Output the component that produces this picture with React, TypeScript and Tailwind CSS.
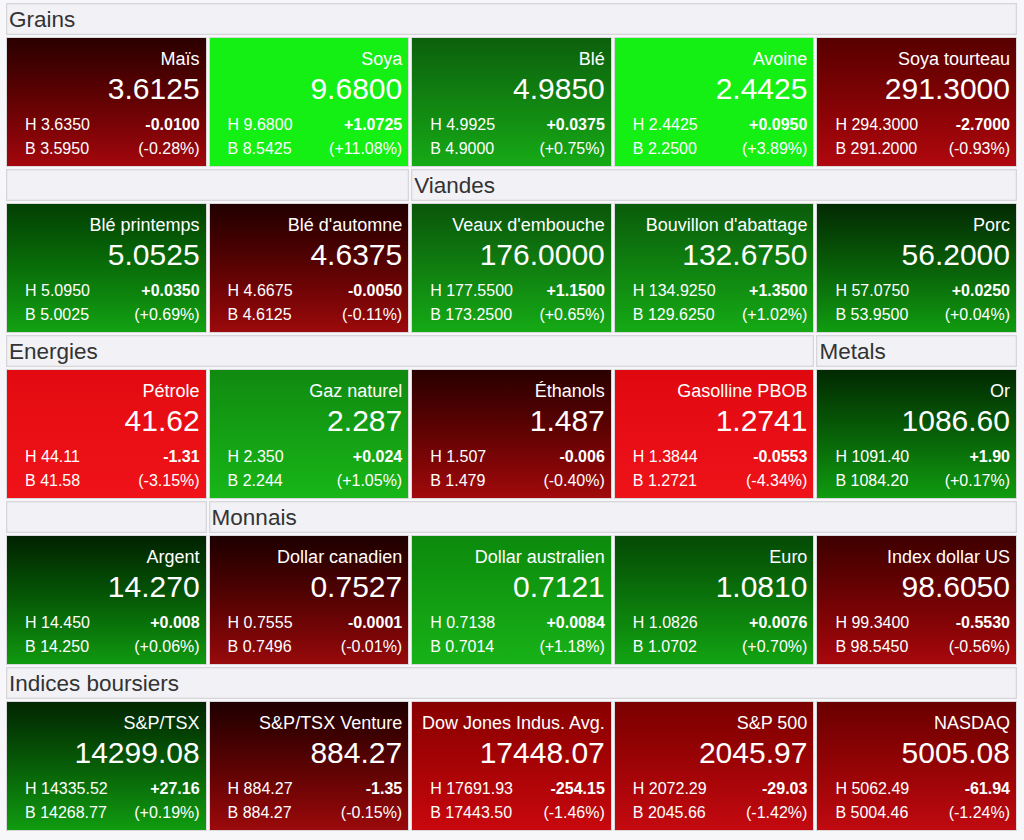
import React from "react";

type Tile = {
  name: string;
  last: string;
  high: string;
  low: string;
  change: string;
  pct: string;
  bg: string;
};

type HeaderCell = { label: string; span: string };

type Section = {
  headers: HeaderCell[];
  tiles: Tile[];
};

const sections: Section[] = [
  {
    headers: [{ label: "Grains", span: "col-span-5" }],
    tiles: [
      { name: "Maïs", last: "3.6125", high: "3.6350", low: "3.5950", change: "-0.0100", pct: "(-0.28%)", bg: "bg-linear-to-b from-[#2b0000] to-[#a3070d]" },
      { name: "Soya", last: "9.6800", high: "9.6800", low: "8.5425", change: "+1.0725", pct: "(+11.08%)", bg: "bg-[#14ef14]" },
      { name: "Blé", last: "4.9850", high: "4.9925", low: "4.9000", change: "+0.0375", pct: "(+0.75%)", bg: "bg-linear-to-b from-[#0c600c] to-[#16aa16]" },
      { name: "Avoine", last: "2.4425", high: "2.4425", low: "2.2500", change: "+0.0950", pct: "(+3.89%)", bg: "bg-[#14ef14]" },
      { name: "Soya tourteau", last: "291.3000", high: "294.3000", low: "291.2000", change: "-2.7000", pct: "(-0.93%)", bg: "bg-linear-to-b from-[#580000] to-[#b0080e]" },
    ],
  },
  {
    headers: [
      { label: "", span: "col-span-2" },
      { label: "Viandes", span: "col-span-3" },
    ],
    tiles: [
      { name: "Blé printemps", last: "5.0525", high: "5.0950", low: "5.0025", change: "+0.0350", pct: "(+0.69%)", bg: "bg-linear-to-b from-[#034003] to-[#12a212]" },
      { name: "Blé d'automne", last: "4.6375", high: "4.6675", low: "4.6125", change: "-0.0050", pct: "(-0.11%)", bg: "bg-linear-to-b from-[#220000] to-[#9c0a0c]" },
      { name: "Veaux d'embouche", last: "176.0000", high: "177.5500", low: "173.2500", change: "+1.1500", pct: "(+0.65%)", bg: "bg-linear-to-b from-[#0a560a] to-[#15aa15]" },
      { name: "Bouvillon d'abattage", last: "132.6750", high: "134.9250", low: "129.6250", change: "+1.3500", pct: "(+1.02%)", bg: "bg-linear-to-b from-[#0a5c0a] to-[#15aa15]" },
      { name: "Porc", last: "56.2000", high: "57.0750", low: "53.9500", change: "+0.0250", pct: "(+0.04%)", bg: "bg-linear-to-b from-[#032a03] to-[#109c10]" },
    ],
  },
  {
    headers: [
      { label: "Energies", span: "col-span-4" },
      { label: "Metals", span: "col-span-1" },
    ],
    tiles: [
      { name: "Pétrole", last: "41.62", high: "44.11", low: "41.58", change: "-1.31", pct: "(-3.15%)", bg: "bg-linear-to-b from-[#e20a10] to-[#f01319]" },
      { name: "Gaz naturel", last: "2.287", high: "2.350", low: "2.244", change: "+0.024", pct: "(+1.05%)", bg: "bg-linear-to-b from-[#108a10] to-[#18b618]" },
      { name: "Éthanols", last: "1.487", high: "1.507", low: "1.479", change: "-0.006", pct: "(-0.40%)", bg: "bg-linear-to-b from-[#2a0000] to-[#a20a0c]" },
      { name: "Gasolline PBOB", last: "1.2741", high: "1.3844", low: "1.2721", change: "-0.0553", pct: "(-4.34%)", bg: "bg-linear-to-b from-[#e0080f] to-[#ef1219]" },
      { name: "Or", last: "1086.60", high: "1091.40", low: "1084.20", change: "+1.90", pct: "(+0.17%)", bg: "bg-linear-to-b from-[#022a02] to-[#109c10]" },
    ],
  },
  {
    headers: [
      { label: "", span: "col-span-1" },
      { label: "Monnais", span: "col-span-4" },
    ],
    tiles: [
      { name: "Argent", last: "14.270", high: "14.450", low: "14.250", change: "+0.008", pct: "(+0.06%)", bg: "bg-linear-to-b from-[#012201] to-[#109a10]" },
      { name: "Dollar canadien", last: "0.7527", high: "0.7555", low: "0.7496", change: "-0.0001", pct: "(-0.01%)", bg: "bg-linear-to-b from-[#1e0000] to-[#980a0c]" },
      { name: "Dollar australien", last: "0.7121", high: "0.7138", low: "0.7014", change: "+0.0084", pct: "(+1.18%)", bg: "bg-linear-to-b from-[#0c8a0c] to-[#18b218]" },
      { name: "Euro", last: "1.0810", high: "1.0826", low: "1.0702", change: "+0.0076", pct: "(+0.70%)", bg: "bg-linear-to-b from-[#054a05] to-[#12a412]" },
      { name: "Index dollar US", last: "98.6050", high: "99.3400", low: "98.5450", change: "-0.5530", pct: "(-0.56%)", bg: "bg-linear-to-b from-[#3e0000] to-[#a8080d]" },
    ],
  },
  {
    headers: [{ label: "Indices boursiers", span: "col-span-5" }],
    tiles: [
      { name: "S&P/TSX", last: "14299.08", high: "14335.52", low: "14268.77", change: "+27.16", pct: "(+0.19%)", bg: "bg-linear-to-b from-[#022602] to-[#109c10]" },
      { name: "S&P/TSX Venture", last: "884.27", high: "884.27", low: "884.27", change: "-1.35", pct: "(-0.15%)", bg: "bg-linear-to-b from-[#200000] to-[#9c0a0c]" },
      { name: "Dow Jones Indus. Avg.", last: "17448.07", high: "17691.93", low: "17443.50", change: "-254.15", pct: "(-1.46%)", bg: "bg-linear-to-b from-[#880000] to-[#c8080e]" },
      { name: "S&P 500", last: "2045.97", high: "2072.29", low: "2045.66", change: "-29.03", pct: "(-1.42%)", bg: "bg-linear-to-b from-[#7a0000] to-[#c40a10]" },
      { name: "NASDAQ", last: "5005.08", high: "5062.49", low: "5004.46", change: "-61.94", pct: "(-1.24%)", bg: "bg-linear-to-b from-[#6a0000] to-[#c00a10]" },
    ],
  },
];

const QuoteTile = ({ t }: { t: Tile }) => (
  <div className={`h-[130px] border border-[#d9d9dd] text-white flex flex-col pt-[10px] ${t.bg}`}>
    <div className="text-[18px] leading-[22px] text-right pr-[6px] whitespace-nowrap">{t.name}</div>
    <div className="text-[30px] leading-[34px] text-right pr-[6px] mt-[2px]">{t.last}</div>
    <div className="flex justify-between pl-[18px] pr-[6px] mt-[7px] text-[16px] leading-[24px]">
      <span>H {t.high}</span>
      <span className="font-bold">{t.change}</span>
    </div>
    <div className="flex justify-between pl-[18px] pr-[6px] text-[16px] leading-[24px]">
      <span>B {t.low}</span>
      <span>{t.pct}</span>
    </div>
  </div>
);

export default function App() {
  return (
    <div
      className="w-[1024px] min-h-[840px] bg-[#f7f7f9] pl-[6px] pr-[7px] pt-[3px]"
      style={{ fontFamily: '"Liberation Sans", Arial, sans-serif' }}
    >
      <div className="grid grid-cols-5 gap-[2px]">
        {sections.map((s, i) => (
          <React.Fragment key={i}>
            {s.headers.map((h, j) => (
              <div
                key={"h" + j}
                className={`${h.span} h-[32px] bg-[#f1f1f6] border border-[#d6d6db] shadow-[inset_0_0_2px_rgba(0,0,0,0.12)] text-[#333] text-[22.5px] leading-[32px] pl-[2px]`}
              >
                {h.label}
              </div>
            ))}
            {s.tiles.map((t, k) => (
              <QuoteTile key={"t" + k} t={t} />
            ))}
          </React.Fragment>
        ))}
      </div>
    </div>
  );
}
